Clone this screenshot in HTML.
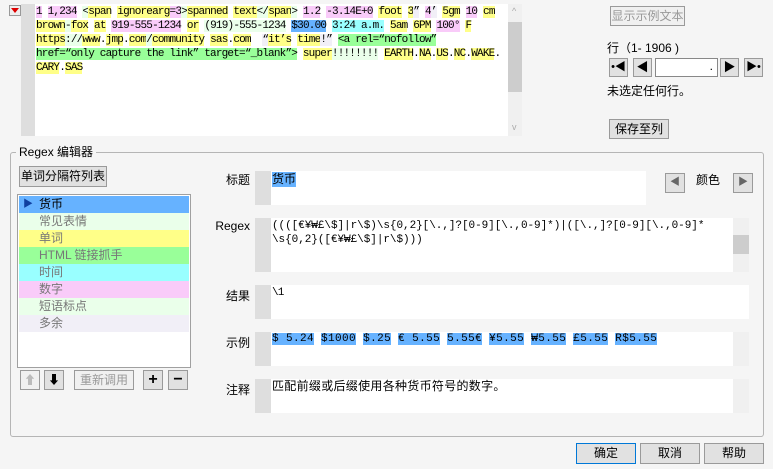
<!DOCTYPE html>
<html><head><meta charset="utf-8"><style>
body{margin:0;width:773px;height:469px;background:#f5f5f5;position:relative;overflow:hidden;font-family:"Liberation Sans","Noto Sans CJK SC",sans-serif;font-size:12px;color:#000}
.a{position:absolute}
.btn{position:absolute;box-sizing:border-box;border:1px solid #9a9a9a;background:#e1e1e1;text-align:center;font-size:12px;line-height:18px}
.mono{font-family:"Liberation Mono","Noto Sans CJK SC",monospace;font-size:11px;letter-spacing:-0.8px}
.tl{position:absolute;left:36px;white-space:pre;height:14px;line-height:14px}
.Y{background:#ffff88}.P{background:#f9cbf9}.B{background:#66b2ff}.C{background:#99ffff}.G{background:#99ff99}.L{background:#eaffea}.V{background:#f1eff7}
.strip{position:absolute;background:#dedede;width:15px}
.fld{position:absolute;background:#fff}
.lbl{position:absolute;text-align:right;width:60px;font-size:12px}
.sb{position:absolute;background:#f0f0f0;width:16px;color:#bbb;font-size:9px;text-align:center}
</style></head><body>
<div class="a" style="left:9px;top:5px;width:12px;height:11px;border:1px solid #999;background:#eee;box-sizing:border-box"></div>
<div class="a" style="left:11px;top:8px;width:0;height:0;border-left:4px solid transparent;border-right:4px solid transparent;border-top:5px solid #d00"></div>
<div class="strip" style="left:21px;top:4px;height:132px;width:14px"></div>
<div class="fld" style="left:35px;top:4px;width:473px;height:132px"></div>
<div class="sb" style="left:508px;top:4px;height:132px;width:14px"></div>
<div class="a" style="left:508px;top:22px;width:14px;height:70px;background:#cdcdcd"></div>
<div class="a" style="left:512px;top:6px;color:#aaa;font-size:9px">^</div>
<div class="a" style="left:512px;top:122px;color:#aaa;font-size:9px">v</div>
<div class="mono">
<div class="tl" style="top:5px"><span class="P">1</span> <span class="P">1,234</span> <span class="L">&lt;</span><span class="Y">span</span> <span class="Y">ignorearg</span><span class="P">=3</span><span class="L">&gt;</span><span class="Y">spanned</span> <span class="Y">text</span><span class="L">&lt;/</span><span class="Y">span</span><span class="L">&gt;</span> <span class="P">1.2</span> <span class="P">-3.14E+0</span> <span class="Y">foot</span> <span class="Y">3</span><span class="V">”</span> <span class="P">4</span><span class="V">’</span> <span class="Y">5gm</span> <span class="P">10</span> <span class="Y">cm</span></div>
<div class="tl" style="top:19px"><span class="Y">brown</span><span class="L">-</span><span class="Y">fox</span> <span class="Y">at</span> <span class="P">919-555-1234</span> <span class="Y">or</span> <span class="L">(919)-555-1234</span> <span class="B">$30.00</span> <span class="C">3:24 a.m.</span> <span class="Y">5am</span> <span class="Y">6PM</span> <span class="P">100°</span> <span class="Y">F</span></div>
<div class="tl" style="top:33px"><span class="Y">https</span><span class="L">://</span><span class="Y">www</span>.<span class="Y">jmp</span>.<span class="Y">com</span><span class="L">/</span><span class="Y">community</span> <span class="Y">sas</span>.<span class="Y">com</span>  <span class="V">“</span><span class="Y">it’s</span> <span class="Y">time</span><span class="V">!”</span> <span class="G">&lt;a rel=“nofollow”</span></div>
<div class="tl" style="top:47px"><span class="G">href=“only capture the link” target=“_blank”&gt;</span> <span class="Y">super</span><span class="L">!!!!!!!!</span> <span class="Y">EARTH</span>.<span class="Y">NA</span>.<span class="Y">US</span>.<span class="Y">NC</span>.<span class="Y">WAKE</span>.</div>
<div class="tl" style="top:61px"><span class="Y">CARY</span>.<span class="Y">SAS</span></div>
</div>
<div class="btn" style="left:610px;top:6px;width:75px;height:20px;color:#999;background:#f0f0f0">显示示例文本</div>
<div class="a" style="left:607px;top:39px">行（1- 1906 )</div>
<div class="btn" style="left:609px;top:58px;width:19px;height:19px;line-height:16px;font-size:11px">•◀</div>
<div class="btn" style="left:633px;top:58px;width:19px;height:19px;line-height:16px">◀</div>
<div class="a" style="left:655px;top:58px;width:63px;height:19px;background:#fff;border:1px solid #888;box-sizing:border-box;text-align:right;padding-right:4px;line-height:14px">.</div>
<div class="btn" style="left:720px;top:58px;width:19px;height:19px;line-height:16px">▶</div>
<div class="btn" style="left:744px;top:58px;width:19px;height:19px;line-height:16px;font-size:11px">▶•</div>
<div class="a" style="left:607px;top:82px">未选定任何行。</div>
<div class="btn" style="left:609px;top:119px;width:60px;height:20px">保存至列</div>
<div class="a" style="left:10px;top:152px;width:754px;height:285px;border:1px solid #b5b5b5;border-radius:3px;box-sizing:border-box"></div>
<div class="a" style="left:16px;top:144px;background:#f5f5f5;padding:0 3px;line-height:16px">Regex 编辑器</div>
<div class="btn" style="left:19px;top:166px;width:88px;height:21px;line-height:19px">单词分隔符列表</div>
<div class="a" style="left:17px;top:194px;width:174px;height:174px;background:#fff;border:1px solid #a0a0a0;box-sizing:border-box"></div>
<div class="a" style="left:19px;top:196px;width:170px;font-size:12px;line-height:17.2px;color:#777">
<div style="background:#66b2ff;color:#000;padding-left:20px;position:relative;height:17px"><span style="position:absolute;left:4px;top:0;color:#1040a0;font-size:10px">▶</span>货币</div>
<div class="L" style="padding-left:20px;height:17px">常见表情</div>
<div class="Y" style="padding-left:20px;height:17px">单词</div>
<div class="G" style="padding-left:20px;height:17px">HTML 链接抓手</div>
<div class="C" style="padding-left:20px;height:17px">时间</div>
<div class="P" style="padding-left:20px;height:17px">数字</div>
<div class="L" style="padding-left:20px;height:17px">短语标点</div>
<div class="V" style="padding-left:20px;height:17px">多余</div>
</div>
<div class="btn" style="left:20px;top:370px;width:20px;height:20px;color:#bbb;background:#f0f0f0;line-height:18px">⬆</div>
<div class="btn" style="left:44px;top:370px;width:20px;height:20px;line-height:18px">⬇</div>
<div class="btn" style="left:74px;top:370px;width:60px;height:20px;color:#999;background:#f0f0f0">重新调用</div>
<div class="btn" style="left:143px;top:370px;width:20px;height:20px;font-weight:bold;font-size:16px">+</div>
<div class="btn" style="left:168px;top:370px;width:20px;height:20px;font-weight:bold;font-size:16px">−</div>
<div class="lbl" style="left:190px;top:171px">标题</div>
<div class="strip" style="left:255px;top:171px;height:34px;width:16px"></div>
<div class="fld" style="left:271px;top:171px;width:375px;height:34px"></div>
<div class="a" style="left:272px;top:172px;background:#66b2ff;line-height:15px">货币</div>
<div class="btn" style="left:665px;top:173px;width:20px;height:20px;color:#666;font-size:10px">◀</div>
<div class="a" style="left:696px;top:171px">颜色</div>
<div class="btn" style="left:733px;top:173px;width:20px;height:20px;color:#666;font-size:10px">▶</div>
<div class="lbl" style="left:190px;top:219px">Regex</div>
<div class="strip" style="left:255px;top:218px;height:54px;width:16px"></div>
<div class="fld" style="left:271px;top:218px;width:478px;height:54px"></div>
<div class="sb" style="left:733px;top:218px;height:54px"></div>
<div class="a" style="left:733px;top:235px;width:16px;height:19px;background:#cdcdcd"></div>
<div class="mono a" style="left:272px;top:219px;line-height:14px;white-space:pre;letter-spacing:-0.05px">((([€¥₩£\$]|r\$)\s{0,2}[\.,]?[0-9][\.,0-9]*)|([\.,]?[0-9][\.,0-9]*
\s{0,2}([€¥₩£\$]|r\$)))</div>
<div class="lbl" style="left:190px;top:287px">结果</div>
<div class="strip" style="left:255px;top:285px;height:34px;width:16px"></div>
<div class="fld" style="left:271px;top:285px;width:478px;height:34px"></div>
<div class="mono a" style="left:272px;top:286px;line-height:14px">\1</div>
<div class="lbl" style="left:190px;top:334px">示例</div>
<div class="strip" style="left:255px;top:332px;height:34px;width:16px"></div>
<div class="fld" style="left:271px;top:332px;width:478px;height:34px"></div>
<div class="sb" style="left:733px;top:332px;height:34px"></div>
<div class="mono a" style="left:272px;top:332px;line-height:14px;white-space:pre;letter-spacing:0.4px"><span class="B">$ 5.24</span> <span class="B">$1000</span> <span class="B">$.25</span> <span class="B">€ 5.55</span> <span class="B">5.55€</span> <span class="B">¥5.55</span> <span class="B">₩5.55</span> <span class="B">£5.55</span> <span class="B">R$5.55</span></div>
<div class="lbl" style="left:190px;top:381px">注释</div>
<div class="strip" style="left:255px;top:379px;height:34px;width:16px"></div>
<div class="fld" style="left:271px;top:379px;width:478px;height:34px"></div>
<div class="sb" style="left:733px;top:379px;height:34px"></div>
<div class="a" style="left:272px;top:379px;line-height:14px;font-size:12px;letter-spacing:0.3px">匹配前缀或后缀使用各种货币符号的数字。</div>
<div class="btn" style="left:576px;top:443px;width:60px;height:21px;border-color:#0078d7;line-height:19px">确定</div>
<div class="btn" style="left:640px;top:443px;width:60px;height:21px;line-height:19px">取消</div>
<div class="btn" style="left:704px;top:443px;width:60px;height:21px;line-height:19px">帮助</div>
</body></html>
